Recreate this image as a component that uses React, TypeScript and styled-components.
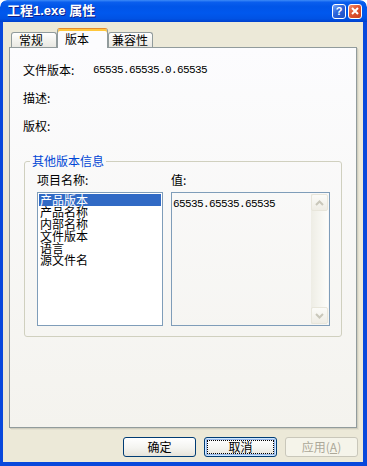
import styled, { createGlobalStyle } from 'styled-components';

const GlobalStyle = createGlobalStyle`
  html, body {
    margin: 0;
    padding: 0;
    background: #ffffff;
  }
  body {
    font-family: "Noto Sans CJK SC", sans-serif;
    font-size: 12px;
    color: #000;
  }
`;

const Frame = styled.div`
  width: 367px;
  height: 466px;
  display: flex;
  flex-direction: column;
  border-radius: 7px 7px 0 0;
  overflow: hidden;
`;

const TitleBar = styled.div`
  height: 22px;
  flex: none;
  display: flex;
  align-items: center;
  padding: 0 5px 0 7px;
  border-radius: 7px 7px 0 0;
  background: linear-gradient(
    to bottom,
    #3d8bf7 0%,
    #0a5eee 10%,
    #0055e8 30%,
    #0058ee 60%,
    #0052e4 85%,
    #0040cc 100%
  );
`;

const TitleText = styled.div`
  flex: 1;
  color: #fff;
  font-family: "Liberation Sans", "Noto Sans CJK SC", sans-serif;
  font-size: 13px;
  font-weight: bold;
  line-height: 14px;
  text-shadow: 1px 1px 0 #0f1e89;
`;

const CaptionButton = styled.div<{ $kind: 'help' | 'close' }>`
  width: 14px;
  height: 15px;
  margin-left: 2px;
  box-sizing: border-box;
  border: 1px solid #fff;
  border-radius: 3px;
  display: flex;
  align-items: center;
  justify-content: center;
  color: #fff;
  font-family: "Liberation Sans", sans-serif;
  font-size: 11px;
  font-weight: bold;
  background: ${(p) =>
    p.$kind === 'close'
      ? 'linear-gradient(135deg, #f08f6c 0%, #e0532f 45%, #c9401f 100%)'
      : 'linear-gradient(135deg, #7aa6f8 0%, #2b63da 45%, #1d4fc4 100%)'};
`;

const Body = styled.div`
  flex: 1;
  display: flex;
  flex-direction: column;
  background: #ece9d8;
  border-style: solid;
  border-color: #0848dc;
  border-width: 0 4px 4px 3px;
  padding: 6px 6px 5px 6px;
  min-height: 0;
`;

const TabStrip = styled.div`
  display: flex;
  align-items: flex-end;
  height: 19px;
  padding-left: 2px;
`;

const Tab = styled.div<{ $active?: boolean; $width: number; $pad: number }>`
  box-sizing: border-box;
  width: ${(p) => p.$width}px;
  padding-left: ${(p) => p.$pad}px;
  border: 1px solid #919b9c;
  border-bottom: 0;
  border-radius: 3px 3px 0 0;
  line-height: 13px;
  height: ${(p) => (p.$active ? 20 : 15)}px;
  padding-top: ${(p) => (p.$active ? 3 : 0)}px;
  margin-bottom: ${(p) => (p.$active ? -1 : 0)}px;
  position: relative;
  z-index: ${(p) => (p.$active ? 1 : 0)};
  background: ${(p) =>
    p.$active ? '#fcfcfe' : 'linear-gradient(to bottom, #ffffff, #f3f3ef 50%, #e9e8e2)'};
  border-top-color: ${(p) => (p.$active ? '#e68b2c' : '#919b9c')};
  box-shadow: ${(p) => (p.$active ? 'inset 0 2px 0 #ffc73c' : 'none')};
`;

const Panel = styled.div`
  flex: 1;
  display: flex;
  flex-direction: column;
  border: 1px solid #919b9c;
  background: linear-gradient(to bottom, #fcfcfe, #f4f3ee);
  box-shadow: 1px 1px 0 #d0cebf, 2px 2px 0 #e3e0d0;
  padding: 16px 14px 0 13px;
`;

const InfoGrid = styled.div`
  display: grid;
  grid-template-columns: 70px 1fr;
  row-gap: 16px;
  line-height: 12px;
`;

const Num = styled.span`
  font-family: "Liberation Mono", monospace;
  font-size: 11px;
  letter-spacing: -0.6px;
`;

const Group = styled.fieldset`
  margin: 23px 0 0 1px;
  padding: 7px 10px 10px 5px;
  border: 1px solid #d0d0bf;
  border-radius: 3px;
  min-width: 0;
`;

const Legend = styled.legend`
  color: #0046d5;
  line-height: 12px;
  padding: 0 2px;
`;

const Columns = styled.div`
  display: grid;
  grid-template-columns: 126px 159px;
  column-gap: 8px;
  row-gap: 6px;
  margin-left: 7px;
  line-height: 12px;
`;

const ListBox = styled.div`
  height: 134px;
  box-sizing: border-box;
  border: 1px solid #7f9db9;
  background: #fff;
  padding: 1px;
`;

const ListItem = styled.div<{ $selected?: boolean }>`
  height: 12px;
  line-height: 12px;
  padding-left: 1px;
  white-space: nowrap;
  background: ${(p) => (p.$selected ? '#316ac5' : 'transparent')};
  color: ${(p) => (p.$selected ? '#fff' : '#000')};
`;

const ValueBox = styled.div`
  height: 134px;
  box-sizing: border-box;
  border: 1px solid #7f9db9;
  display: flex;
`;

const ValueText = styled.div`
  flex: 1;
  padding: 3px 1px;
  line-height: 12px;
`;

const ScrollBar = styled.div`
  width: 17px;
  margin: 1px 1px 1px 0;
  display: flex;
  flex-direction: column;
  justify-content: space-between;
  background: linear-gradient(to right, #eeede5, #fdfdfa);
`;

const ScrollButton = styled.div`
  width: 17px;
  height: 17px;
  box-sizing: border-box;
  border: 1px solid #e8e6db;
  border-radius: 2px;
  background: linear-gradient(to bottom, #fbfbf8, #efede5);
  display: flex;
  align-items: center;
  justify-content: center;
`;

const ButtonRow = styled.div`
  display: flex;
  justify-content: flex-end;
  gap: 8px;
  margin: 9px -1px 0 0;
`;

const Button = styled.button<{ $variant?: 'normal' | 'focus' | 'disabled' }>`
  width: 73px;
  height: 20px;
  box-sizing: border-box;
  padding: 0;
  font-family: "Noto Sans CJK SC", sans-serif;
  font-size: 12px;
  line-height: 12px;
  border-radius: 3px;
  border: 1px solid ${(p) => (p.$variant === 'disabled' ? '#c9c7ba' : '#003c74')};
  color: ${(p) => (p.$variant === 'disabled' ? '#aca899' : '#000')};
  background: ${(p) =>
    p.$variant === 'disabled'
      ? '#f5f4ea'
      : 'linear-gradient(to bottom, #ffffff 0%, #f4f4f0 55%, #e6e3da 100%)'};
  box-shadow: ${(p) =>
    p.$variant === 'focus'
      ? 'inset 0 0 0 1px #cee7ff, inset 0 0 0 2px #98b8ea'
      : 'none'};
  outline: ${(p) => (p.$variant === 'focus' ? '1px dotted #000' : 'none')};
  outline-offset: -4px;
`;

const Chevron = ({ up }: { up?: boolean }) => (
  <svg width="9" height="6" viewBox="0 0 9 6">
    <polyline
      points={up ? '1,5 4.5,1.5 8,5' : '1,1 4.5,4.5 8,1'}
      fill="none"
      stroke="#c9c7ba"
      strokeWidth="2"
    />
  </svg>
);

const items = ['产品版本', '产品名称', '内部名称', '文件版本', '语言', '源文件名'];

export default function App() {
  return (
    <>
      <GlobalStyle />
      <Frame>
        <TitleBar>
          <TitleText>工程1.exe 属性</TitleText>
          <CaptionButton $kind="help">?</CaptionButton>
          <CaptionButton $kind="close">
            <svg width="8" height="8" viewBox="0 0 8 8">
              <path d="M1 1 L7 7 M7 1 L1 7" stroke="#fff" strokeWidth="2" />
            </svg>
          </CaptionButton>
        </TitleBar>
        <Body>
          <TabStrip>
            <Tab $width={46} $pad={7}>常规</Tab>
            <Tab $active $width={51} $pad={7}>版本</Tab>
            <Tab $width={45} $pad={3}>兼容性</Tab>
          </TabStrip>
          <Panel>
            <InfoGrid>
              <span>文件版本:</span>
              <Num>65535.65535.0.65535</Num>
              <span>描述:</span>
              <span />
              <span>版权:</span>
              <span />
            </InfoGrid>
            <Group>
              <Legend>其他版本信息</Legend>
              <Columns>
                <span>项目名称:</span>
                <span>值:</span>
                <ListBox>
                  {items.map((it, i) => (
                    <ListItem key={it} $selected={i === 0}>
                      {it}
                    </ListItem>
                  ))}
                </ListBox>
                <ValueBox>
                  <ValueText>
                    <Num>65535.65535.65535</Num>
                  </ValueText>
                  <ScrollBar>
                    <ScrollButton>
                      <Chevron up />
                    </ScrollButton>
                    <ScrollButton>
                      <Chevron />
                    </ScrollButton>
                  </ScrollBar>
                </ValueBox>
              </Columns>
            </Group>
          </Panel>
          <ButtonRow>
            <Button>确定</Button>
            <Button $variant="focus">取消</Button>
            <Button $variant="disabled">
              应用(<u>A</u>)
            </Button>
          </ButtonRow>
        </Body>
      </Frame>
    </>
  );
}
